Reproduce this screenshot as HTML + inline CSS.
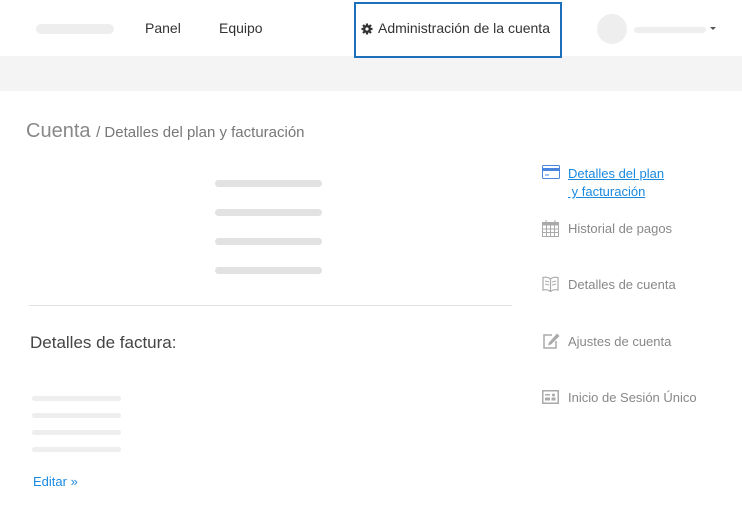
<!DOCTYPE html>
<html><head><meta charset="utf-8"><style>
*{margin:0;padding:0;box-sizing:border-box}
body{width:742px;height:505px;background:#fff;font-family:"Liberation Sans",sans-serif;position:relative;overflow:hidden;color:#333}
.a{position:absolute}
.bar{position:absolute;border-radius:4px}
.nav{font-size:14px;color:#333;top:20px}
.side{position:absolute;left:568px;font-size:13px;color:#888}
.ic{position:absolute;left:542px}
</style></head><body>
<div class="a" style="left:0;top:56px;width:742px;height:35px;background:#f4f4f4"></div>
<div class="bar" style="left:36px;top:24px;width:78px;height:10px;background:#eee;border-radius:5px"></div>
<div class="a nav" style="left:145px">Panel</div>
<div class="a nav" style="left:219px">Equipo</div>
<div class="a" style="left:354px;top:2px;width:208px;height:56px;border:2px solid #1c6fb8;background:#fff"></div>
<svg class="a" style="left:361px;top:23px" width="12" height="12" viewBox="0 0 12 12"><circle cx="6" cy="6" r="4" fill="#333"/><g stroke="#333" stroke-width="2.2"><line x1="6" y1="0.5" x2="6" y2="11.5"/><line x1="0.5" y1="6" x2="11.5" y2="6"/><line x1="2" y1="2" x2="10" y2="10"/><line x1="10" y1="2" x2="2" y2="10"/></g><circle cx="6" cy="6" r="1.6" fill="#fff"/></svg>
<div class="a nav" style="left:378px">Administración de la cuenta</div>
<div class="a" style="left:597px;top:14px;width:30px;height:30px;border-radius:50%;background:#eee"></div>
<div class="bar" style="left:634px;top:27px;width:72px;height:6px;background:#eee;border-radius:3px"></div>
<div class="a" style="left:710px;top:27px;width:0;height:0;border-left:3px solid transparent;border-right:3px solid transparent;border-top:3px solid #555"></div>

<div class="a" style="left:26px;top:120px;font-size:20px;color:#888">Cuenta <span style="font-size:15px;color:#777">/ Detalles del plan y facturación</span></div>
<div class="bar" style="left:215px;top:180px;width:107px;height:7px;background:#e2e2e2"></div>
<div class="bar" style="left:215px;top:209px;width:107px;height:7px;background:#e2e2e2"></div>
<div class="bar" style="left:215px;top:238px;width:107px;height:7px;background:#e2e2e2"></div>
<div class="bar" style="left:215px;top:267px;width:107px;height:7px;background:#e2e2e2"></div>
<div class="a" style="left:29px;top:305px;width:483px;height:1px;background:#e2e2e2"></div>
<div class="a" style="left:30px;top:333px;font-size:17px;color:#444">Detalles de factura:</div>
<div class="bar" style="left:32px;top:396px;width:89px;height:5px;background:#eee"></div>
<div class="bar" style="left:32px;top:413px;width:89px;height:5px;background:#eee"></div>
<div class="bar" style="left:32px;top:430px;width:89px;height:5px;background:#eee"></div>
<div class="bar" style="left:32px;top:447px;width:89px;height:5px;background:#eee"></div>
<div class="a" style="left:33px;top:474px;font-size:13px;color:#1a8ae0">Editar »</div>

<svg class="ic" style="top:165px" width="18" height="14" viewBox="0 0 18 14"><rect x="0.5" y="0.5" width="17" height="13" rx="1" fill="#fff" stroke="#4a86e0"/><rect x="0.5" y="3" width="17" height="3" fill="#4a86e0"/><line x1="3" y1="10" x2="7" y2="10" stroke="#4a86e0"/></svg>
<div class="side" style="top:165px;color:#1a8ae0;text-decoration:underline;line-height:18px">Detalles del plan<br>&nbsp;y facturación</div>
<svg class="ic" style="top:220px" width="17" height="17" viewBox="0 0 17 17"><rect x="0.5" y="2.5" width="16" height="14" fill="none" stroke="#aaa"/><rect x="0.5" y="2.5" width="16" height="3" fill="#aaa"/><g stroke="#aaa"><line x1="4" y1="0" x2="4" y2="4"/><line x1="13" y1="0" x2="13" y2="4"/><line x1="0" y1="9" x2="17" y2="9"/><line x1="0" y1="12.5" x2="17" y2="12.5"/><line x1="4.5" y1="5" x2="4.5" y2="17"/><line x1="8.5" y1="5" x2="8.5" y2="17"/><line x1="12.5" y1="5" x2="12.5" y2="17"/></g></svg>
<div class="side" style="top:221px">Historial de pagos</div>
<svg class="ic" style="top:276px" width="17" height="16" viewBox="0 0 17 16"><path d="M8.5 3 C6 1 3 1 1 1.5 V14 C3 13.5 6 13.5 8.5 15.5 C11 13.5 14 13.5 16 14 V1.5 C14 1 11 1 8.5 3 Z M8.5 3 V15.5" fill="none" stroke="#aaa" stroke-width="1.2"/><g stroke="#aaa"><line x1="3" y1="5" x2="7" y2="6"/><line x1="3" y1="8" x2="7" y2="9"/><line x1="10" y1="6" x2="14" y2="5"/><line x1="10" y1="9" x2="14" y2="8"/></g></svg>
<div class="side" style="top:277px">Detalles de cuenta</div>
<svg class="ic" style="top:333px" width="18" height="16" viewBox="0 0 18 16"><path d="M10 2 H2 V15 H14 V8" fill="none" stroke="#aaa" stroke-width="1.5"/><path d="M15 0.5 L17.5 3 L9 11.5 L6 12.5 L7 9.5 Z" fill="#aaa"/></svg>
<div class="side" style="top:334px">Ajustes de cuenta</div>
<svg class="ic" style="top:390px" width="17" height="14" viewBox="0 0 17 14"><rect x="0.75" y="0.75" width="15.5" height="12.5" fill="none" stroke="#aaa" stroke-width="1.5"/><rect x="3" y="4" width="5" height="1.5" fill="#aaa"/><rect x="3" y="7.5" width="5" height="3" fill="#aaa"/><circle cx="11.5" cy="5" r="1.5" fill="#aaa"/><rect x="9.5" y="7.5" width="4" height="3" fill="#aaa"/></svg>
<div class="side" style="top:390px">Inicio de Sesión Único</div>
</body></html>
